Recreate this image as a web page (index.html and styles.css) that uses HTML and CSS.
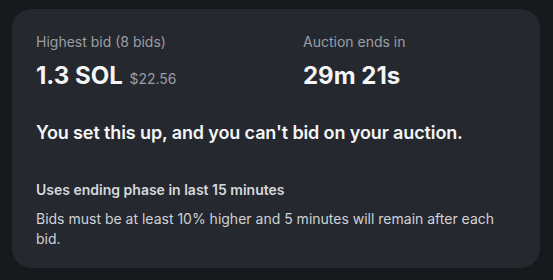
FILE: index.html
```html
<!DOCTYPE html>
<html lang="en">
<head>
  <meta charset="UTF-8" />
  <title>Auction</title>
  <link rel="stylesheet" href="styles.css">
</head>
<body>
  <div class="card">
    <div class="stats">
      <div class="stat">
        <div class="label">Highest bid (8 bids)</div>
        <div class="value">1.3 SOL <span class="usd">$22.56</span></div>
      </div>
      <div class="stat">
        <div class="label">Auction ends in</div>
        <div class="value">29m 21s</div>
      </div>
    </div>

    <div class="notice">You set this up, and you can't bid on your auction.</div>

    <div class="phase">
      <div class="phase-title">Uses ending phase in last 15 minutes</div>
      <p class="phase-text">Bids must be at least 10% higher and 5 minutes will remain after each bid.</p>
    </div>
  </div>
</body>
</html>
```

FILE: styles.css
```css
body {
  margin: 0;
  padding: 9px 13px 12px 12px;
  font-family: 'Inter', 'Noto Sans', sans-serif;
  background-color: #18191d;
  color: #f4f5f7;
}

.card {
  background-color: #25282e;
  border-radius: 20px;
  padding: 23px 24px 24px 24px;
  height: 259px;
  box-sizing: border-box;
}

.stats {
  display: grid;
  grid-template-columns: 267px 1fr;
}

.label {
  font-size: 14px;
  color: #9a9ea6;
  line-height: 20px;
}

.value {
  margin-top: 9px;
  font-size: 24px;
  font-weight: 700;
  line-height: 30px;
}

.usd {
  font-size: 14px;
  font-weight: 400;
  color: #9a9ea6;
  margin-left: 1px;
}

.notice {
  margin-top: 26px;
  font-size: 18px;
  font-weight: 600;
  line-height: 26px;
  letter-spacing: -0.12px;
}

.phase {
  margin-top: 34px;
}

.phase-title {
  font-size: 14px;
  font-weight: 600;
  color: #d6d8dc;
  line-height: 20px;
}

.phase-text {
  margin: 9px 0 0 0;
  font-size: 14px;
  color: #cfd2d7;
  line-height: 20px;
}
```
